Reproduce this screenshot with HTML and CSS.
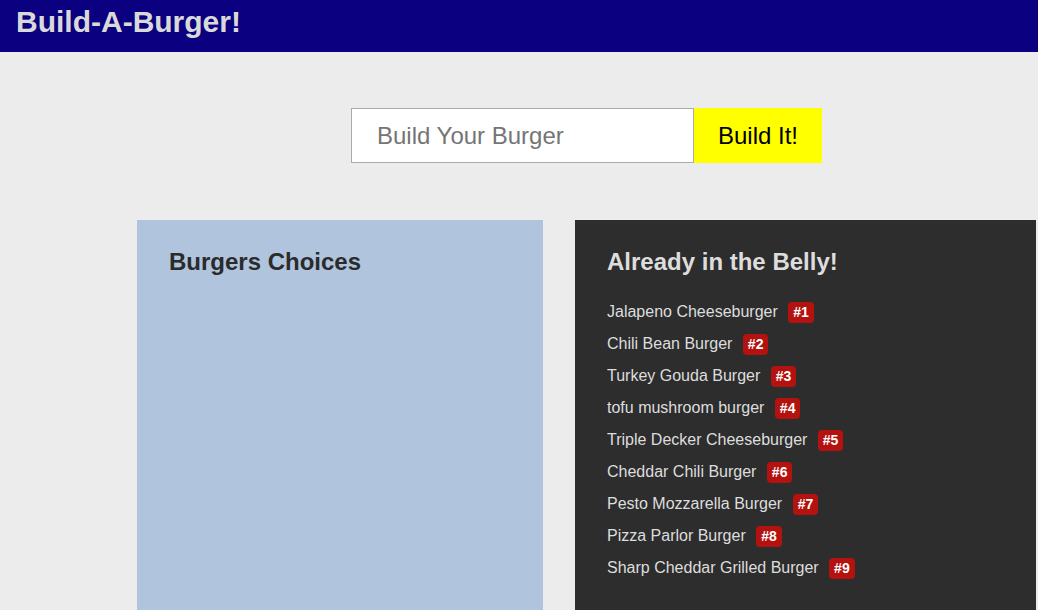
FILE: index.html
```html
<!DOCTYPE html>
<html lang="en">
<head>
<meta charset="utf-8">
<title>Build-A-Burger!</title>
<link rel="stylesheet" href="styles.css">
</head>
<body>
<header class="topbar">
  <h1 class="brand">Build-A-Burger!</h1>
</header>
<main class="page">
  <form class="build-form">
    <input class="build-input" type="text" placeholder="Build Your Burger">
    <button class="build-btn" type="button">Build It!</button>
  </form>
  <section class="panels">
    <div class="panel panel-choices">
      <h2 class="panel-title">Burgers Choices</h2>
    </div>
    <div class="panel panel-belly">
      <h2 class="panel-title">Already in the Belly!</h2>
      <ul class="burger-list">
        <li class="burger">Jalapeno Cheeseburger <span class="badge">#1</span></li>
        <li class="burger">Chili Bean Burger <span class="badge">#2</span></li>
        <li class="burger">Turkey Gouda Burger <span class="badge">#3</span></li>
        <li class="burger">tofu mushroom burger <span class="badge">#4</span></li>
        <li class="burger">Triple Decker Cheeseburger <span class="badge">#5</span></li>
        <li class="burger">Cheddar Chili Burger <span class="badge">#6</span></li>
        <li class="burger">Pesto Mozzarella Burger <span class="badge">#7</span></li>
        <li class="burger">Pizza Parlor Burger <span class="badge">#8</span></li>
        <li class="burger">Sharp Cheddar Grilled Burger <span class="badge">#9</span></li>
      </ul>
    </div>
  </section>
</main>
</body>
</html>
```
FILE: styles.css
```css
html, body {
  margin: 0;
  padding: 0;
}
body {
  background: #ececec;
  font-family: "Liberation Sans", Arial, sans-serif;
  height: 610px;
  overflow: hidden;
}
.topbar {
  background: #0a0080;
  height: 52px;
  padding: 0 16px;
  box-sizing: border-box;
}
.brand {
  margin: 0;
  font-size: 30px;
  line-height: 44px;
  font-weight: bold;
  color: #d9d9d9;
}
.page {
  padding-top: 56px;
}
.build-form {
  display: flex;
  margin: 0 0 0 351px;
  height: 55px;
}
.build-input {
  width: 343px;
  height: 55px;
  box-sizing: border-box;
  border: 1px solid #aaaaaa;
  background: #fff;
  padding: 0 0 0 25px;
  font-family: "Liberation Sans", Arial, sans-serif;
  font-size: 24px;
  color: #333;
  outline: none;
}
.build-input::placeholder {
  color: #757575;
}
.build-btn {
  width: 128px;
  height: 55px;
  border: none;
  background: #ffff00;
  color: #000;
  font-family: "Liberation Sans", Arial, sans-serif;
  font-size: 24px;
  padding: 0;
  cursor: pointer;
}
.panels {
  display: flex;
  gap: 32px;
  margin: 57px 0 0 137px;
}
.panel {
  height: 400px;
  box-sizing: border-box;
  padding: 28px 32px;
}
.panel-choices {
  width: 406px;
  background: #b0c4de;
}
.panel-belly {
  width: 461px;
  background: #2d2d2d;
}
.panel-title {
  margin: 0;
  font-size: 24px;
  font-weight: bold;
  line-height: 28px;
}
.panel-choices .panel-title {
  color: #2b2b2b;
}
.panel-belly .panel-title {
  color: #dddddd;
}
.burger-list {
  list-style: none;
  margin: 20px 0 0;
  padding: 0;
}
.burger {
  font-size: 16px;
  line-height: 32px;
  color: #dddddd;
}
.badge {
  display: inline-block;
  margin-left: 6px;
  background: #b3120e;
  color: #fff;
  font-weight: bold;
  font-size: 14px;
  line-height: 21px;
  padding: 0 5px;
  border-radius: 4px;
  vertical-align: 0;
}
```
